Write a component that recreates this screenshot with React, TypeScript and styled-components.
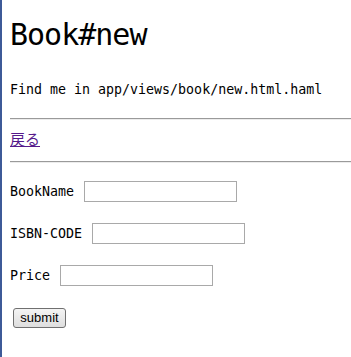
import React from 'react';
import styled, { createGlobalStyle } from 'styled-components';

const GlobalStyle = createGlobalStyle`
  html, body {
    margin: 0;
    padding: 0;
    background: #ffffff;
  }
`;

const Page = styled.div`
  min-height: 100vh;
  box-sizing: border-box;
  border-left: 2px solid #3d5a98;
  padding-left: 8px;
  font-family: 'DejaVu Sans Mono', 'Liberation Mono', monospace;
  color: #000;
  overflow: hidden;
`;

const Title = styled.h1`
  margin: 20px 0 0;
  font-size: 30px;
  line-height: 30px;
  letter-spacing: -1px;
  font-weight: normal;
`;

const PathNote = styled.p`
  margin: 32px 0 0;
  font-size: 13.3px;
  line-height: 16px;
`;

const Rule = styled.hr<{ $gap: number }>`
  margin: ${({ $gap }) => $gap}px 0 0;
  height: 0;
  border: 0;
  border-top: 1px solid #9a9a9a;
  border-bottom: 1px solid #ececec;
`;

const BackLink = styled.a`
  display: inline-block;
  margin-top: 11px;
  font-family: 'Noto Sans CJK JP', sans-serif;
  font-size: 15px;
  line-height: 16px;
  color: #551a8b;
  text-decoration: underline;
`;

const Form = styled.form`
  margin-top: 18px;
  display: flex;
  flex-direction: column;
  align-items: flex-start;
  gap: 21px;
`;

const Row = styled.div`
  display: flex;
  align-items: center;
  gap: 10px;
  height: 21px;
`;

const Label = styled.label`
  font-size: 13.3px;
  line-height: 16px;
`;

const TextInput = styled.input`
  box-sizing: border-box;
  width: 153px;
  height: 21px;
  margin: 0;
  padding: 1px 3px;
  border: 1px solid #a9a9a9;
  background: #fff;
  font-family: 'Liberation Sans', sans-serif;
  font-size: 13px;
`;

const SubmitButton = styled.button`
  box-sizing: border-box;
  margin: 1px 0 0 3px;
  width: 53px;
  height: 20px;
  padding: 0;
  border: 1px solid #707070;
  border-radius: 3px;
  background: linear-gradient(#f4f4f4, #dedede);
  font-family: 'Liberation Sans', Arial, sans-serif;
  font-size: 13px;
  line-height: 18px;
  color: #000;
`;

const fields = [
  { id: 'book_name', label: 'BookName' },
  { id: 'isbn_code', label: 'ISBN-CODE' },
  { id: 'price', label: 'Price' },
];

export default function App() {
  return (
    <Page>
      <GlobalStyle />
      <Title>Book#new</Title>
      <PathNote>Find me in app/views/book/new.html.haml</PathNote>
      <Rule $gap={20} />
      <BackLink href="#">戻る</BackLink>
      <Rule $gap={12} />
      <Form onSubmit={e => e.preventDefault()}>
        {fields.map(f => (
          <Row key={f.id}>
            <Label htmlFor={f.id}>{f.label}</Label>
            <TextInput id={f.id} type="text" />
          </Row>
        ))}
        <SubmitButton type="submit">submit</SubmitButton>
      </Form>
    </Page>
  );
}
